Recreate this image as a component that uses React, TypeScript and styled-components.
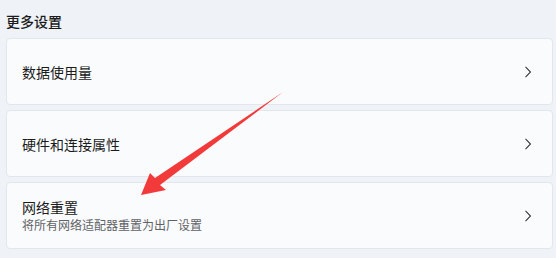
import React from "react";
import styled, { createGlobalStyle } from "styled-components";

const GlobalStyle = createGlobalStyle`
  html, body {
    margin: 0;
    padding: 0;
    background: #eff2f7;
  }
  body {
    font-family: "Noto Sans CJK SC", "Noto Sans", sans-serif;
    color: #1b1b1b;
  }
`;

const Page = styled.div`
  position: relative;
  width: 556px;
  height: 258px;
  overflow: hidden;
  padding: 0 3px 0 6px;
  box-sizing: border-box;
`;

const SectionTitle = styled.div`
  height: 38px;
  display: flex;
  align-items: center;
  padding-top: 4px;
  box-sizing: border-box;
  font-size: 14px;
  font-weight: 500;
`;

const List = styled.div`
  display: flex;
  flex-direction: column;
  gap: 5px;
`;

const Card = styled.div`
  height: 67px;
  box-sizing: border-box;
  background: #fafbfd;
  border: 1px solid #e3e6ea;
  border-radius: 4px;
  display: flex;
  align-items: center;
  justify-content: space-between;
  padding: 0 20px 0 15px;
`;

const Texts = styled.div`
  display: flex;
  flex-direction: column;
`;

const Label = styled.span`
  font-size: 14px;
  line-height: 18px;
`;

const Desc = styled.span`
  font-size: 12px;
  line-height: 17px;
  color: #606266;
`;

const Overlay = styled.svg`
  position: absolute;
  left: 0;
  top: 0;
  pointer-events: none;
`;

const Chevron = () => (
  <svg width="8" height="12" viewBox="0 0 8 12">
    <path d="M1.5 0.8 L6.5 6 L1.5 11.2" fill="none" stroke="#3a3a3a" strokeWidth="1.1" />
  </svg>
);

const items = [
  { label: "数据使用量" },
  { label: "硬件和连接属性" },
  { label: "网络重置", desc: "将所有网络适配器重置为出厂设置" },
];

export default function App() {
  return (
    <>
      <GlobalStyle />
      <Page>
        <SectionTitle>更多设置</SectionTitle>
        <List>
          {items.map((it) => (
            <Card key={it.label}>
              <Texts>
                <Label>{it.label}</Label>
                {it.desc && <Desc>{it.desc}</Desc>}
              </Texts>
              <Chevron />
            </Card>
          ))}
        </List>
        <Overlay width="556" height="258" viewBox="0 0 556 258">
          <polygon
            points="283,92 160,185 166,190 141,195 150,173 155,178"
            fill="#f23a3a"
          />
        </Overlay>
      </Page>
    </>
  );
}
